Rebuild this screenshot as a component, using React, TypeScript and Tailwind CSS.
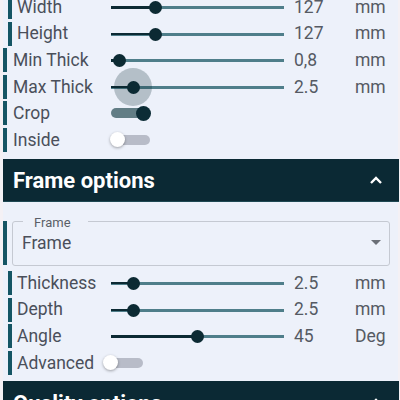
import React from "react";

type SliderRowProps = {
  label: string;
  indent?: boolean;
  pos: number;
  value: string;
  unit: string;
  halo?: boolean;
};

function Bar({ indent }: { indent?: boolean }) {
  return (
    <div
      className={
        indent
          ? "ml-[5px] w-[4px] h-[24px] bg-[#155564] shrink-0"
          : "w-[4px] h-[24px] bg-[#155564] shrink-0"
      }
    />
  );
}

function Slider({ pos, halo }: { pos: number; halo?: boolean }) {
  return (
    <div className="relative w-[173px] h-[26px] shrink-0">
      <div className="absolute left-0 right-0 top-[12px] h-[3px] bg-[#4f7e8a]" />
      <div
        className="absolute left-0 top-[12px] h-[2.5px] bg-[#0c2a33]"
        style={{ width: pos }}
      />
      {halo && (
        <div
          className="absolute top-[-6px] w-[38px] h-[38px] rounded-full bg-[#0c2a33] opacity-25"
          style={{ left: pos - 19 }}
        />
      )}
      <div
        className="absolute top-[7px] w-[13px] h-[13px] rounded-full bg-[#0c2a33]"
        style={{ left: pos - 6.5 }}
      />
    </div>
  );
}

function SliderRow({ label, indent, pos, value, unit, halo }: SliderRowProps) {
  return (
    <div className="flex items-center h-[26.6px]">
      <div className="flex items-center w-[108px] shrink-0">
        <Bar indent={indent} />
        <span
          className={
            indent
              ? "ml-[5px] text-[17.5px] text-[#4a4f5a] whitespace-nowrap"
              : "ml-[6px] text-[17.5px] text-[#4a4f5a] whitespace-nowrap"
          }
        >
          {label}
        </span>
      </div>
      <Slider pos={pos} halo={halo} />
      <span className="ml-[10px] w-[61px] text-[17.5px] text-[#555a63]">{value}</span>
      <span className="text-[17.5px] text-[#555a63]">{unit}</span>
    </div>
  );
}

function Switch({ on }: { on?: boolean }) {
  return (
    <div className="relative w-[39px] h-[26px] shrink-0">
      <div
        className={
          on
            ? "absolute left-0 right-0 top-[8px] h-[10px] rounded-full bg-[#627d85]"
            : "absolute left-0 right-0 top-[8px] h-[10px] rounded-full bg-[#b8bcc8]"
        }
      />
      <div
        className={
          on
            ? "absolute top-[5.5px] left-[25px] w-[15px] h-[15px] rounded-full bg-[#0c2c36]"
            : "absolute top-[5.5px] left-[-1.5px] w-[15px] h-[15px] rounded-full bg-white shadow-[0_1px_3px_rgba(0,0,0,0.35)]"
        }
      />
    </div>
  );
}

function SwitchRow({
  label,
  on,
  indent,
  labelWidth,
}: {
  label: string;
  on?: boolean;
  indent?: boolean;
  labelWidth: string;
}) {
  return (
    <div className="flex items-center h-[26.6px]">
      <div className={"flex items-center shrink-0 " + labelWidth}>
        <Bar indent={indent} />
        <span
          className={
            indent
              ? "ml-[5px] text-[17.5px] text-[#4a4f5a] whitespace-nowrap"
              : "ml-[6px] text-[17.5px] text-[#4a4f5a] whitespace-nowrap"
          }
        >
          {label}
        </span>
      </div>
      <Switch on={on} />
    </div>
  );
}

function Header({ title }: { title: string }) {
  return (
    <div className="flex items-center justify-between h-[43px] bg-[#0b2934] border-b border-[#1f4853] pl-[10px] pr-[16px] w-[396px]">
      <span className="text-[22px] font-bold text-white leading-none pt-[3px]">{title}</span>
      <svg width="14" height="10" viewBox="0 0 14 10">
        <path d="M2 8 L7 3 L12 8" stroke="white" strokeWidth="2.4" fill="none" />
      </svg>
    </div>
  );
}

export default function App() {
  return (
    <div className="w-[400px] h-[400px] overflow-hidden bg-[#f4f1f5] font-['Roboto',sans-serif]">
      <div className="ml-[3px] w-[395px] h-[400px] bg-[#edf1fa]">
        <div className="mt-[-6.3px]">
          <SliderRow label="Width" indent pos={44} value="127" unit="mm" />
          <SliderRow label="Height" indent pos={44} value="127" unit="mm" />
          <SliderRow label="Min Thick" pos={8} value="0,8" unit="mm" />
          <SliderRow label="Max Thick" pos={22} value="2.5" unit="mm" halo />
          <SwitchRow label="Crop" on labelWidth="w-[108px]" />
          <SwitchRow label="Inside" labelWidth="w-[108px]" />
        </div>
        <div className="mt-[5.7px]">
          <Header title="Frame options" />
        </div>
        <div className="mt-[19px] flex items-center h-[45px]">
          <div className="w-[4px] h-[44px] bg-[#155564] shrink-0" />
          <div className="relative ml-[5px] w-[378px] h-[45px] border border-[#c5c9d2] rounded-[3px] flex items-center pl-[9px] pr-[9px] justify-between">
            <span className="absolute left-[10px] top-[-7px] h-[16px] leading-[16px] w-[65px] pl-[11px] bg-[#edf1fa] text-[13px] text-[#5a5f68]">
              Frame
            </span>
            <span className="text-[17.5px] text-[#4a4f5a]">Frame</span>
            <svg width="10" height="6" viewBox="0 0 10 6" className="mr-[-1px]">
              <path d="M0 0 L10 0 L5 5 Z" fill="#6b6f77" />
            </svg>
          </div>
        </div>
        <div className="mt-[3.7px]">
          <SliderRow label="Thickness" indent pos={22} value="2.5" unit="mm" />
          <SliderRow label="Depth" indent pos={22} value="2.5" unit="mm" />
          <SliderRow label="Angle" indent pos={86} value="45" unit="Deg" />
          <SwitchRow label="Advanced" indent labelWidth="w-[101px]" />
        </div>
        <div className="mt-[5px]">
          <Header title="Quality options" />
        </div>
      </div>
    </div>
  );
}
